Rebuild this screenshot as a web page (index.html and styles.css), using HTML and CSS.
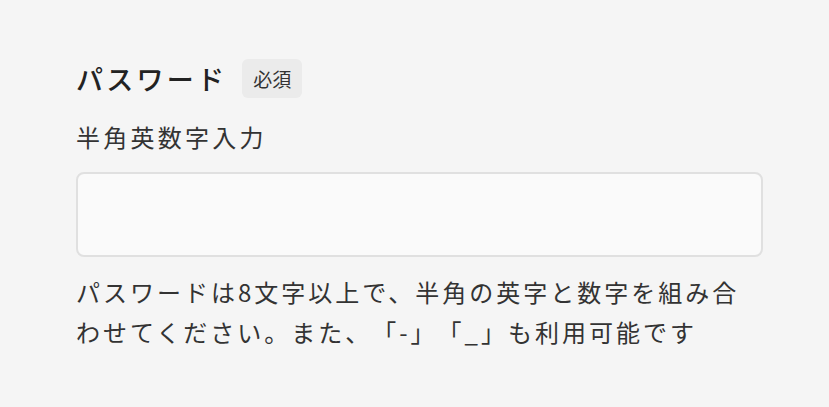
FILE: index.html
```html
<!DOCTYPE html>
<html lang="ja">
<head>
<meta charset="utf-8">
<link rel="stylesheet" href="styles.css">
</head>
<body>
<div class="field">
  <div class="field-head">
    <span class="field-title">パスワード</span>
    <span class="badge">必須</span>
  </div>
  <label class="field-label" for="pw">半角英数字入力</label>
  <input class="field-input" id="pw" type="password">
  <p class="field-help">パスワードは8文字以上で、半角の英字と数字を組み合わせてください。また、「-」「_」も利用可能です</p>
</div>
</body>
</html>
```
FILE: styles.css
```css
html, body {
  margin: 0;
  padding: 0;
  background: #f5f5f5;
}
body {
  font-family: "Noto Sans CJK JP", "Noto Sans", sans-serif;
  color: #333;
  padding: 59px 66px 0 76px;
  text-spacing-trim: space-all;
}
.field {
  display: flex;
  flex-direction: column;
}
.field-head {
  display: flex;
  align-items: center;
  gap: 15px;
  height: 39px;
}
.field-title {
  font-size: 27px;
  font-weight: 500;
  letter-spacing: 0.12em;
  color: #222;
  line-height: 39px;
}
.badge {
  display: flex;
  align-items: center;
  justify-content: center;
  width: 60px;
  height: 39px;
  border-radius: 6px;
  background: #ebebeb;
  font-size: 19px;
  color: #333;
}
.field-label {
  margin-top: 21px;
  font-size: 24px;
  line-height: 36px;
  letter-spacing: 0.135em;
}
.field-input {
  margin-top: 17px;
  box-sizing: border-box;
  width: 100%;
  height: 85px;
  border: 2px solid #e0e0e0;
  border-radius: 8px;
  background: #fafafa;
  outline: none;
}
.field-help {
  margin: 15px 0 0;
  font-size: 24px;
  line-height: 40px;
  letter-spacing: 0.125em;
  text-spacing-trim: space-all;
}
```
